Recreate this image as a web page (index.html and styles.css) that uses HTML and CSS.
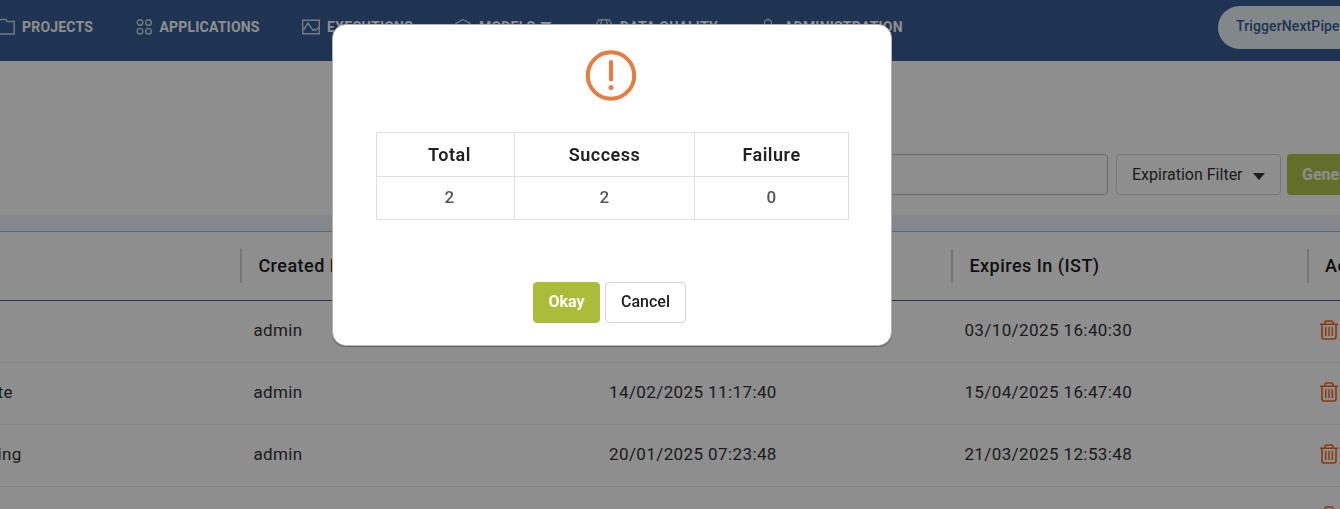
FILE: index.html
```html
<!DOCTYPE html>
<html lang="en">
<head>
<meta charset="utf-8">
<title>Tokens</title>
<link rel="stylesheet" href="styles.css">
</head>
<body>
<svg class="defs" aria-hidden="true">
  <symbol id="trash" viewBox="0 0 18 20"><g fill="none" stroke="currentColor" stroke-width="1.600"><path d="M0 4.200h18M2 4.200v12.800q0 2 2 2h10q2 0 2-2v-12.800M5 4V2.500Q5 1 6.500 1h5Q13 1 13 2.500V4"/><path stroke-width="1.400" d="M5.700 7v9M9 7v9M12.300 7v9"/></g></symbol>
</svg>
<header class="topbar">
  <nav class="nav">
    <a class="item"><svg class="icon" width="18" height="18" viewBox="0 0 18 18"><path d="M1 1.500h7l1 2h7.200v12.500H1z"/></svg><span>PROJECTS</span></a>
    <a class="item"><svg class="icon apps" width="18" height="18" viewBox="0 0 18 18"><circle cx="4" cy="4.500" r="2.800"/><circle cx="12.500" cy="4.500" r="2.800"/><circle cx="4" cy="13.200" r="2.800"/><circle cx="12.500" cy="13.200" r="2.800"/></svg><span>APPLICATIONS</span></a>
    <a class="item"><svg class="icon" width="18" height="18" viewBox="0 0 18 18"><path d="M.7 2.200h16.600v13.600H.7zM1.500 12l4.500-7 5 7.500 1.500-1.500 1 1.500 3.500-3.500"/></svg><span>EXECUTIONS</span></a>
    <a class="item"><svg class="icon" width="18" height="18" viewBox="0 0 18 18"><path d="M9 1.500l7 4v8l-7 4-7-4v-8z"/></svg><span>MODELS</span><i class="caret"></i></a>
    <a class="item"><svg class="icon" width="18" height="18" viewBox="0 0 18 18"><path d="M4 1.700h10l3 5-8 10-8-10zM1 6.700h16M7 1.700L5.500 6.700 9 16.700l3.500-10L11 1.700"/></svg><span>DATA QUALITY</span></a>
    <a class="item"><svg class="icon" width="18" height="18" viewBox="0 0 18 18"><circle cx="8" cy="5" r="3.500"/><path d="M1 17q0-7 7-7t7 7"/></svg><span>ADMINISTRATION</span></a>
  </nav>
  <div class="user">TriggerNextPipeline</div>
</header>
<section class="toolbar">
  <div class="search"></div>
  <div class="filter"><span>Expiration Filter</span><i class="arrow"></i></div>
  <div class="generate">Generate</div>
</section>
<div class="band"></div>
<main class="grid">
  <div class="row head"><div></div><div>Created By</div><div>Created On (IST)</div><div>Expires In (IST)</div><div>Actions</div></div>
  <div class="row"><div></div><div>admin</div><div></div><div>03/10/2025 16:40:30</div><div><svg class="trash"><use href="#trash"/></svg></div></div>
  <div class="row"><div class="clip">te</div><div>admin</div><div>14/02/2025 11:17:40</div><div>15/04/2025 16:47:40</div><div><svg class="trash"><use href="#trash"/></svg></div></div>
  <div class="row"><div class="clip">ing</div><div>admin</div><div>20/01/2025 07:23:48</div><div>21/03/2025 12:53:48</div><div><svg class="trash"><use href="#trash"/></svg></div></div>
  <div class="row"><div></div><div></div><div></div><div></div><div><svg class="trash"><use href="#trash"/></svg></div></div>
</main>
<div class="overlay">
  <div class="modal">
    <svg class="alert" width="52" height="52" viewBox="0 0 52 52"><circle cx="26" cy="25.500" r="23.200" fill="none" stroke="#e47d43" stroke-width="4"/><path d="M26 12v17.500" stroke="#e47d43" stroke-width="4.200" stroke-linecap="round"/><circle cx="26" cy="37.500" r="2.500" fill="#e47d43"/></svg>
    <table class="summary">
      <tr><th>Total</th><th>Success</th><th>Failure</th></tr>
      <tr><td>2</td><td>2</td><td>0</td></tr>
    </table>
    <div class="actions"><button class="btn okay">Okay</button><button class="btn">Cancel</button></div>
  </div>
</div>
</body>
</html>
```
FILE: styles.css
```css
* { box-sizing: border-box; }
html, body { overflow: hidden; }
body { margin: 0; height: 509px; background: #fff; color: #333; font: 16px/24px Roboto, sans-serif; }
.defs { position: absolute; width: 0; height: 0; }
.topbar { display: flex; height: 61px; background: #385c94; overflow: hidden; }
.nav { flex: none; width: 1218px; display: grid; grid-template-columns: 137.5px 166.5px 152px 141px 165px 1fr; margin-left: -2px; height: 54px; align-items: center; color: #fff; font-size: 14px; font-weight: 700; line-height: 20px; letter-spacing: .2px; }
.item { display: flex; align-items: center; white-space: nowrap; }
.icon { flex: none; margin-right: 6px; fill: none; stroke: #c9dcea; stroke-width: 1.4; }
.item:nth-child(n+3) .icon { margin-right: 7px; }
.item:last-child .icon { margin-right: 6px; }
.caret { margin: -4px 0 0 5px; border: 6px solid transparent; border-top-color: #fff; border-bottom: 0; }
.user { flex: none; width: 200px; height: 43px; margin: 6px 0 0 2px; padding-left: 18px; border-radius: 22px; background: #eaf3f8; color: #385c94; font-size: 14px; font-weight: 500; line-height: 41px; letter-spacing: .12px; }
.toolbar { display: flex; height: 154px; padding: 93px 0 0 700px; overflow: hidden; }
.search { flex: none; width: 408px; height: 41px; border: 1px solid #bdbdbd; border-radius: 4px; }
.filter { flex: none; display: flex; align-items: center; width: 165px; height: 41px; margin-left: 8px; padding-left: 15px; border: 1px solid #d2d4d6; border-radius: 4px; }
.arrow { margin: 3px 0 0 10px; border: 6px solid transparent; border-top: 7px solid #333; border-bottom: 0; }
.generate { flex: none; width: 110px; height: 41px; margin-left: 6px; padding-left: 15px; border-radius: 4px; background: #b3c54c; color: #fff; font-weight: 700; line-height: 41px; }
.band { height: 17px; background: #edf5fb; border-bottom: 1px solid #a8b9cf; }
.row { display: grid; grid-template-columns: 240.4px 355.6px 355.4px 355.6px 120px; width: 1428px; height: 62px; padding-bottom: 3px; align-items: center; border-bottom: 1px solid #eee; font-size: 17px; letter-spacing: .4px; }
.row > div { padding-left: 13px; white-space: nowrap; }
.row > .clip { padding-left: 0; margin-left: -2.5px; }
.head { height: 69px; padding: 0; border-bottom-color: #385c94; color: #1c1c1c; font-size: 18px; font-weight: 500; letter-spacing: .48px; }
.head > div { height: 34px; padding-left: 16px; border-left: 2px solid #d2d2d2; line-height: 34px; }
.head > div:first-child { border: 0; }
.trash { display: block; width: 18px; height: 20px; color: #fa6416; }
.overlay { position: fixed; inset: 0; padding: 24px 0 0 332px; background: rgba(0, 0, 0, .443); }
.modal { display: flex; flex-direction: column; align-items: center; width: 560px; height: 322px; padding-top: 25px; border: 1px solid #b4b4b4; border-radius: 14px; background: #fff; box-shadow: 0 1px 1px rgba(0, 0, 0, .3); }
.alert { flex: none; margin-left: -2px; }
.summary { width: 473px; margin: 30px 0 0 1px; border-collapse: collapse; table-layout: fixed; color: #212121; text-align: center; letter-spacing: .5px; }
.summary th, .summary td { border: 1px solid #dee0e4; padding: 0 0 0 8px; height: 44px; }
.summary th { width: 138px; font-size: 18px; font-weight: 600; }
.summary th:nth-child(2) { width: 180px; padding-left: 0; }
.summary th:nth-child(3) { width: 154px; padding-left: 0; }
.summary td { height: 43px; padding-bottom: 2px; font-size: 17px; font-weight: 500; color: #555; }
.summary td + td { padding-left: 0; }
.actions { display: flex; gap: 5px; margin: 62px 5px 0 0; }
.btn { width: 81px; height: 41px; padding: 0 0 2px; border: 1px solid #cfd4da; border-radius: 4px; background: #fff; color: #212121; font: 500 16px Roboto, sans-serif; }
.okay { width: 67px; border-color: #aabd3a; background: #aabd3a; color: #fff; font-weight: 700; }
```
